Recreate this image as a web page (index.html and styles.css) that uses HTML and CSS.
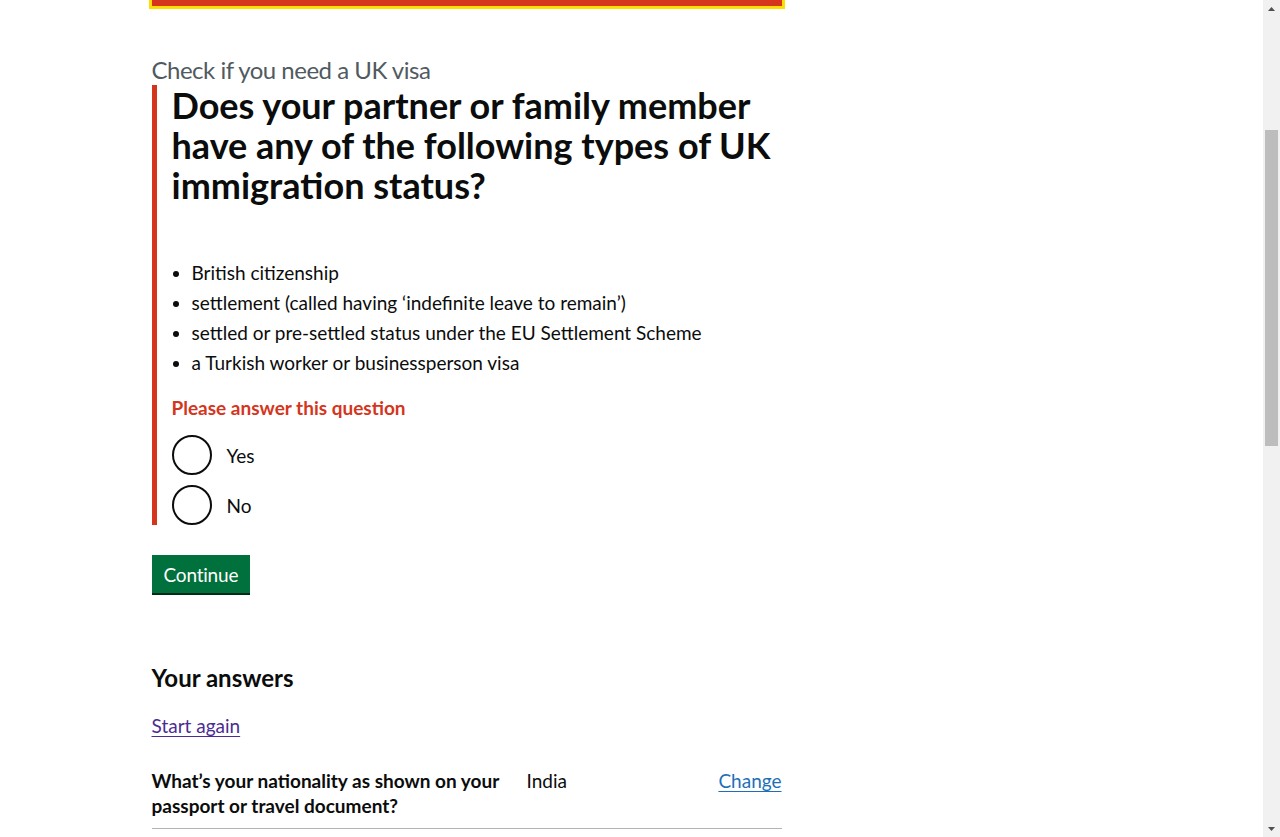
FILE: index.html
```html
<!DOCTYPE html>
<html lang="en">
<head>
<meta charset="utf-8">
<title>Check if you need a UK visa - GOV.UK</title>
<link rel="stylesheet" href="styles.css">
</head>
<body>
<div class="page">
  <div class="viewport">
    <div class="width-container">
      <main class="main">
        <div class="column">
          <div class="error-summary-edge" aria-hidden="true"></div>

          <form class="question-form">
            <span class="caption">Check if you need a UK visa</span>
            <div class="form-group form-group-error">
              <fieldset class="fieldset">
                <legend class="legend">Does your partner or family member have any of the following types of UK immigration status?</legend>
                <ul class="bullets">
                  <li>British citizenship</li>
                  <li>settlement (called having ‘indefinite leave to remain’)</li>
                  <li>settled or pre-settled status under the EU Settlement Scheme</li>
                  <li>a Turkish worker or businessperson visa</li>
                </ul>
                <p class="error-message" id="response">Please answer this question</p>
                <div class="radios">
                  <label class="radio">
                    <input class="radio-input" type="radio" name="response" value="yes">
                    <span class="radio-label">Yes</span>
                  </label>
                  <label class="radio">
                    <input class="radio-input" type="radio" name="response" value="no">
                    <span class="radio-label">No</span>
                  </label>
                </div>
              </fieldset>
            </div>
            <button class="button" type="submit">Continue</button>
          </form>

          <section class="answers">
            <h2 class="answers-title">Your answers</h2>
            <p class="start-again"><a class="link-visited" href="#">Start again</a></p>
            <dl class="summary-list">
              <div class="summary-row">
                <dt class="summary-key">What’s your nationality as shown on your passport or travel document?</dt>
                <dd class="summary-value">India</dd>
                <dd class="summary-actions"><a class="link" href="#">Change</a></dd>
              </div>
            </dl>
          </section>
        </div>
      </main>
    </div>
  </div>

  <div class="scrollbar" aria-hidden="true">
    <div class="scroll-button">
      <svg width="7" height="4" viewBox="0 0 7 4"><polygon points="0,4 3.5,0 7,4" fill="#505050"/></svg>
    </div>
    <div class="scroll-track">
      <div class="scroll-thumb"></div>
    </div>
    <div class="scroll-button">
      <svg width="7" height="4" viewBox="0 0 7 4"><polygon points="0,0 7,0 3.5,4" fill="#505050"/></svg>
    </div>
  </div>
</div>
</body>
</html>
```
FILE: styles.css
```css
* { box-sizing: border-box; }

html, body { height: 100%; }

body {
  margin: 0;
  font-family: Lato, "Liberation Sans", Arial, sans-serif;
  color: #0b0c0c;
  background: #ffffff;
  overflow: hidden;
}

.page {
  display: flex;
  height: 100vh;
}

.viewport {
  flex: 1;
  min-width: 0;
  overflow: hidden;
}

/* Fake browser scrollbar, in flow at the right edge */
.scrollbar {
  flex: none;
  width: 17px;
  background: #f1f1f1;
  display: flex;
  flex-direction: column;
}
.scroll-button {
  flex: none;
  height: 17px;
  display: flex;
  align-items: center;
  justify-content: center;
}
.scroll-track { flex: 1; }
.scroll-thumb {
  margin: 113px 2px 0;
  height: 316px;
  background: #bdbdbd;
}

.width-container {
  max-width: 960px;
  margin: 0 auto;
}

.column { width: 630px; }

/* The bottom edge of the focused error summary, scrolled mostly out of view */
.error-summary-edge {
  height: 6px;
  background: #d4351c;
  outline: 3px solid #ffdd00;
  margin-bottom: 49px;
}

/* Question */
.caption {
  display: block;
  color: #505a5f;
  font-size: 24px;
  line-height: 30px;
  letter-spacing: -0.5px;
}

.form-group { margin-bottom: 30px; }
.form-group-error {
  border-left: 5px solid #d4351c;
  padding-left: 15px;
}

.fieldset { margin: 0; padding: 0; border: 0; min-width: 0; }

.legend {
  padding: 0;
  margin: 0 0 55px;
  font-size: 36px;
  line-height: 40px;
  font-weight: 700;
}

.bullets {
  margin: 0 0 20px;
  padding-left: 20px;
  font-size: 19px;
  line-height: 25px;
}
.bullets li { margin-bottom: 5px; }

.error-message {
  margin: 0 0 15px;
  color: #d4351c;
  font-weight: 700;
  font-size: 19px;
  line-height: 25px;
}

.radios { display: flex; flex-direction: column; gap: 10px; }
.radio {
  display: flex;
  align-items: center;
  gap: 15px;
  height: 40px;
  cursor: pointer;
}
.radio-input {
  appearance: none;
  -webkit-appearance: none;
  margin: 0;
  width: 40px;
  height: 40px;
  border: 2px solid #0b0c0c;
  border-radius: 50%;
  background: #ffffff;
  flex: none;
}
.radio-label { font-size: 19px; line-height: 25px; }

.button {
  display: inline-block;
  margin: 0 0 32px;
  padding: 8px 10px 7px;
  border: 2px solid transparent;
  border-radius: 0;
  background: #00703c;
  box-shadow: 0 2px 0 #002d18;
  color: #ffffff;
  font-family: inherit;
  font-size: 19px;
  line-height: 19px;
  letter-spacing: -0.2px;
  cursor: pointer;
}

/* Answers */
.answers { margin-top: 38px; }
.answers-title {
  margin: 0 0 20px;
  font-size: 24px;
  line-height: 30px;
  font-weight: 700;
}
.start-again {
  margin: 0 0 20px;
  font-size: 19px;
  line-height: 25px;
}
.link-visited, .link {
  text-decoration: underline;
  text-decoration-thickness: 1px;
  text-underline-offset: 3px;
}
.link-visited { color: #4c2c92; }
.link { color: #1d70b8; }

.summary-list { margin: 0; font-size: 19px; line-height: 25px; }
.summary-row {
  display: grid;
  grid-template-columns: 375px 1fr auto;
  border-bottom: 1px solid #b1b4b6;
  padding: 10px 0;
}
.summary-key { margin: 0; padding-right: 20px; font-weight: 700; }
.summary-value { margin: 0; padding-right: 20px; }
.summary-actions { margin: 0; text-align: right; }
```
